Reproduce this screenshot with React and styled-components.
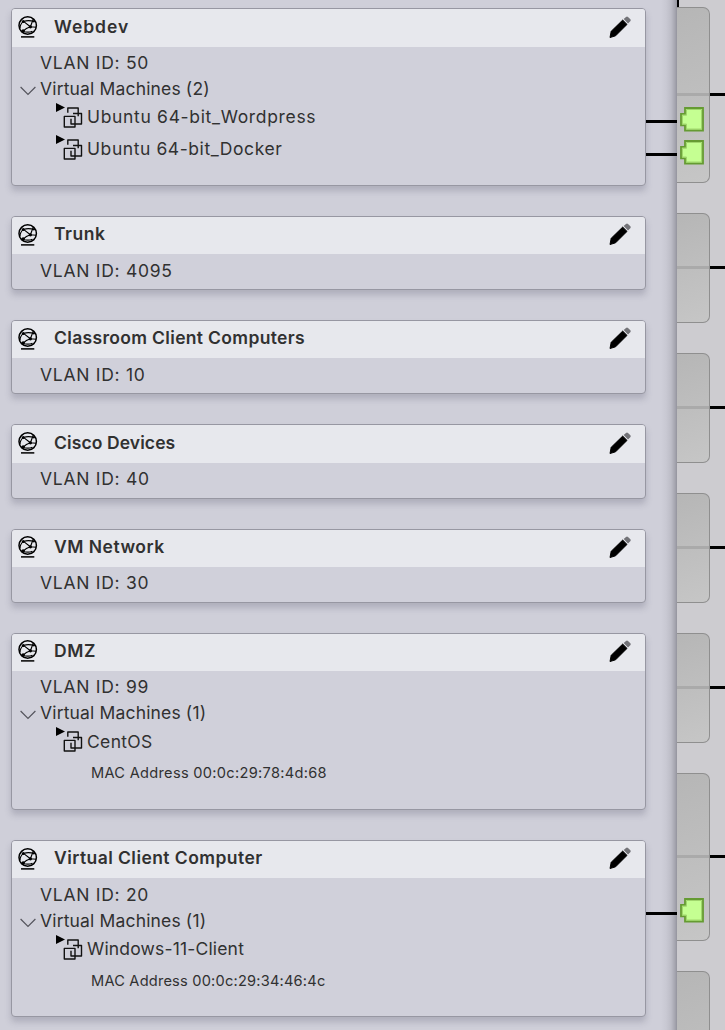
import React from 'react';
import styled, { createGlobalStyle } from 'styled-components';

const Global = createGlobalStyle`
  * { box-sizing: border-box; }
  html, body { margin: 0; background: #cfcfd9; overflow: hidden; }
  body { font-family: Inter, "Liberation Sans", sans-serif; color: #313131; }
  svg { display: block; flex: none; }
`;

const Screen = styled.div`
  display: flex;
  width: 725px;
  height: 1030px;
  overflow: hidden;
`;

const Panel = styled.div`
  width: 677px;
  height: 1030px;
  flex: none;
  padding: 8.4px 0 0 11px;
  background: linear-gradient(90deg, #cfcfd9 0, #cfcfd9 661px, #c9c9d3 666px, #bdbdc7 671px, #a5a5af 675px, #94949e 677px);
`;

const PortGroup = styled.div`
  display: flex;
  height: ${(p) => p.$height}px;
  margin-bottom: 30px;
`;

const Card = styled.div`
  width: 635px;
  height: 100%;
  border: 1px solid #9797a2;
  border-radius: 4px;
  overflow: hidden;
  background: #d0d0da;
  box-shadow: 0 5px 6px rgba(90, 90, 110, 0.27);
`;

const CardHeader = styled.div`
  display: flex;
  align-items: center;
  height: 37.2px;
  padding: 0 13px 1.8px 5px;
  background: #e7e8ed;
`;

const Title = styled.div`
  flex: 1;
  margin: 0 0 0.9px 16px;
  font-size: 17.5px;
  line-height: 24px;
  font-weight: 600;
  letter-spacing: ${(p) => p.$spacing}px;
  white-space: nowrap;
`;

const Line = styled.div`
  display: flex;
  align-items: center;
  height: 26px;
  margin-top: ${(p) => p.$top || 0}px;
  padding-left: ${(p) => p.$indent}px;
  font-size: ${(p) => p.$size || 17.5}px;
  letter-spacing: ${(p) => p.$spacing || 0}px;
  white-space: nowrap;
`;

const Caret = styled.div`
  padding-top: 4px;
  margin-right: 4px;
`;

const VmMark = styled.div`
  margin: -2px 4px 0 0;
`;

const Wires = styled.div`
  width: 31px;
  padding-top: ${(p) => p.$top}px;
  display: flex;
  flex-direction: column;
  gap: 30px;
`;

const Wire = styled.div`
  height: 3px;
  flex: none;
  background: #000;
`;

const Fabric = styled.div`
  flex: 1;
  height: 1030px;
  background: #cdccd0;
`;

const TopStub = styled.div`
  width: 2px;
  height: 7px;
  background: #000;
`;

const SwitchRow = styled.div`
  display: flex;
  height: ${(p) => p.$height}px;
  margin-bottom: ${(p) => p.$gap}px;
`;

const SwitchBody = styled.div`
  width: 33px;
  flex: none;
  border: 1px solid #8f8f8f;
  border-left: 0;
  border-radius: 0 7px 7px 0;
  padding: ${(p) => p.$line - 1}px 0 0;
  background: linear-gradient(160deg, #b6b6b6, #c6c6c6);
`;

const InnerWire = styled.div`
  height: 3px;
  background: #aaa;
`;

const OuterWire = styled.div`
  width: 15px;
  height: 3px;
  margin-top: ${(p) => p.$line}px;
  background: #000;
`;

const Ports = styled.div`
  display: flex;
  flex-direction: column;
  gap: 8px;
  padding: ${(p) => p.$top}px 0 0 3px;
`;

const NetworkIcon = () => (
  <svg width="21" height="24" viewBox="0 0 21 24" fill="none" stroke="#000">
    <circle cx="10.7" cy="10.5" r="8.7" strokeWidth="1.5" />
    <path d="M6.5 6.4Q12 4.6 17.4 6.8M6.5 6.4L13.4 11.8 16.2 4.2M6.5 6.4Q3 9 3 13.5M6.2 16.2Q9 13.2 13.4 11.8L19.2 12.2M6.2 16.2Q11 18 15.4 16.2" strokeWidth="1.1" />
    <g fill="#000" stroke="none">
      <circle cx="6.3" cy="6.4" r="1.5" />
      <circle cx="13.4" cy="11.8" r="1.6" />
      <circle cx="6.2" cy="16" r="1.8" />
      <circle cx="16.8" cy="6.3" r="1.1" />
    </g>
    <path d="M4 21.8H17.3" stroke="#222" strokeWidth="1.8" />
  </svg>
);

const PencilIcon = () => (
  <svg width="23" height="23" viewBox="0 0.5 23 23">
    <path d="M1 22L2.2 15.8 13.7 4.6 18 8.9 6.6 20.3Z" fill="#000" stroke="#000" strokeWidth="1" strokeLinejoin="round" />
    <path d="M14.7 3.6L17 1.4Q18 .5 19 1.4L21.4 3.8Q22.2 4.8 21.3 5.7L19 8Z" fill="#737378" />
  </svg>
);

const CaretIcon = () => (
  <svg width="16" height="10" viewBox="0 0 16 10" fill="none" stroke="#55555d" strokeWidth="1.2">
    <path d="M.6 1L8 8.5 15.4 1" />
  </svg>
);

const VmIcon = () => (
  <svg width="27" height="26" viewBox="0 0 27 26" fill="none" stroke="#111" strokeWidth="1.4" strokeLinejoin="round">
    <path d="M0 0L9 4.5 0 9Z" fill="#000" stroke="none" />
    <path d="M11.8 9.8V5H22.2V13.2M17 10.5H25.5V21H15V15.7M8.3 13.4H19V24H8.3Z" />
  </svg>
);

const PortIcon = () => (
  <svg width="25" height="25" viewBox="0 0 25 25">
    <path d="M5 1H23V23.5H5V18.4H1V6.8H5Z" fill="#c5ff92" stroke="#659b32" strokeWidth="1.8" />
    <path d="M6.5 2.5H21.5V22H6.5V17H2.5V8.3H6.5Z" fill="none" stroke="#a0d66c" strokeWidth="1" />
  </svg>
);

const groups = [
  { name: 'Webdev', spacing: 0.95, vlan: 50, height: 177.7, vms: [{ name: 'Ubuntu 64-bit_Wordpress', spacing: 0.67 }, { name: 'Ubuntu 64-bit_Docker', spacing: 0.57 }], wireTop: 111.6 },
  { name: 'Trunk', spacing: 0.5, vlan: 4095, height: 74.15 },
  { name: 'Classroom Client Computers', spacing: 0.33, vlan: 10, height: 74.15 },
  { name: 'Cisco Devices', spacing: 0.1, vlan: 40, height: 74.15 },
  { name: 'VM Network', spacing: 0.5, vlan: 30, height: 74.15 },
  { name: 'DMZ', spacing: 0.6, vlan: 99, height: 177.6, vms: [{ name: 'CentOS', spacing: 0.33 }], mac: '00:0c:29:78:4d:68', macSpacing: 0.3 },
  { name: 'Virtual Client Computer', spacing: 0.44, vlan: 20, height: 177, vms: [{ name: 'Windows-11-Client', spacing: 0.17 }], mac: '00:0c:29:34:46:4c', macSpacing: 0.21, wireTop: 71.7 },
];

const switches = [
  { height: 176, gap: 30, line: 86, ports: 2, portsTop: 11 },
  { height: 110, gap: 30, line: 53 },
  { height: 110, gap: 30, line: 53 },
  { height: 110, gap: 30, line: 53 },
  { height: 110, gap: 30, line: 53 },
  { height: 168, gap: 30, line: 82, ports: 1, portsTop: 40 },
  { height: 168, gap: 0, line: 82 },
];

function Group({ group }) {
  return (
    <PortGroup $height={group.height}>
      <Card>
        <CardHeader>
          <NetworkIcon />
          <Title $spacing={group.spacing}>{group.name}</Title>
          <PencilIcon />
        </CardHeader>
        <Line $indent={28} $top={3.1} $spacing={0.72}>VLAN ID: {group.vlan}</Line>
        {group.vms && (
          <Line $indent={8} $spacing={0.16}>
            <Caret><CaretIcon /></Caret>
            Virtual Machines ({group.vms.length})
          </Line>
        )}
        {group.vms && group.vms.map((vm, i) => (
          <Line key={vm.name} $indent={44} $top={i ? 5.6 : 2.3} $spacing={vm.spacing}>
            <VmMark><VmIcon /></VmMark>
            {vm.name}
          </Line>
        ))}
        {group.mac && <Line $indent={79} $top={5.9} $size={14.6} $spacing={group.macSpacing}>MAC Address {group.mac}</Line>}
      </Card>
      {group.wireTop && (
        <Wires $top={group.wireTop}>
          {group.vms.map((vm) => <Wire key={vm.name} />)}
        </Wires>
      )}
    </PortGroup>
  );
}

export default function App() {
  return (
    <>
      <Global />
      <Screen>
        <Panel>
          {groups.map((group) => <Group key={group.name} group={group} />)}
        </Panel>
        <Fabric>
          <TopStub />
          {switches.map((item, i) => (
            <SwitchRow key={i} $height={item.height} $gap={item.gap}>
              <SwitchBody $line={item.line}>
                <InnerWire />
                {item.ports && (
                  <Ports $top={item.portsTop}>
                    {Array.from({ length: item.ports }, (_, n) => <PortIcon key={n} />)}
                  </Ports>
                )}
              </SwitchBody>
              <OuterWire $line={item.line} />
            </SwitchRow>
          ))}
        </Fabric>
      </Screen>
    </>
  );
}
